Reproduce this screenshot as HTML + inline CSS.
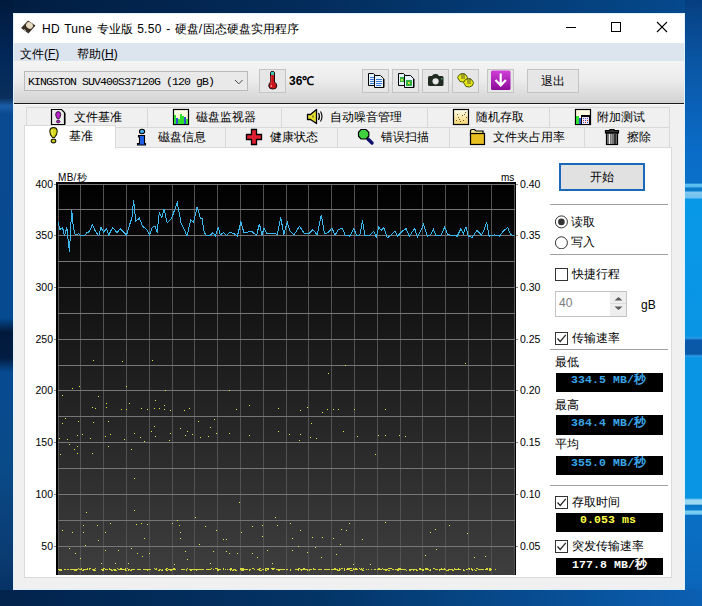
<!DOCTYPE html>
<html><head><meta charset="utf-8">
<style>
*{margin:0;padding:0;box-sizing:border-box}
html,body{width:702px;height:606px;overflow:hidden}
body{position:relative;font-family:"Liberation Sans",sans-serif;font-size:12px;color:#000;
background:linear-gradient(90deg,#011d40 0%,#032a58 40%,#054a8e 100%)}
.a{position:absolute}
.t{position:absolute;white-space:nowrap;line-height:12px;font-size:12px}
#rstrip{left:685px;top:0;width:17px;height:606px;background:linear-gradient(180deg,#063f80 0px,#0a55a3 60px,#0a6cc8 150px,#0a70c8 183px,#60c0f0 184.5px,#50b8ee 187px,#0a78c8 188px,#0a80d0 191px,#80c8f0 192px,#70c0f0 198px,#0898e8 199px,#0a94e4 336px,#2a9ae8 338px,#0a58a8 340.5px,#0a58a8 354px,#2a9ae8 356px,#0a94e4 358px,#0a94e4 498px,#9ad8f4 500px,#9ad8f4 504px,#0a78c8 505.5px,#0a80d0 510px,#80d0f0 511px,#70c8f0 514px,#0a70c4 515.5px,#0a68bc 580px,#0a5aac 606px)}
#lstrip{left:0;top:0;width:13px;height:606px;background:linear-gradient(180deg,#011a3c 0px,#02285a 60px,#0a2f5c 98px,#1a5ea8 106px,#0a4a90 114px,#064a8f 318px,#021a3c 332px,#021d42 358px,#074a90 372px,#0a4a88 470px,#0a3a70 560px,#042d60 606px)}
#bstrip{left:0;top:590px;width:702px;height:16px;background:linear-gradient(90deg,#02234c 0%,#033466 45%,#0b5fb2 100%)}
#win{left:13px;top:13px;width:672px;height:577px;background:#f0f0f0;border:1px solid #dff1fb}
#title{left:14px;top:14px;width:670px;height:29px;background:#fff}
#menu{left:14px;top:43px;width:670px;height:18px;background:#dce4ee}
#tool{left:14px;top:61px;width:670px;height:42px;background:linear-gradient(180deg,#f4f4f4 0%,#ececec 45%,#d2d2d2 100%)}
#tline{left:14px;top:103px;width:670px;height:1px;background:#1a1a1a;box-shadow:0 1px 0 #fafafa}
.btn{position:absolute;background:#e6e6e6;border:1px solid #c4c4c4}
.tab{position:absolute;background:#f0f0f0;border:1px solid #d9d9d9;border-bottom:none}
.sep{position:absolute;height:1px;background:#a0a0a0}
.cb{position:absolute;width:13px;height:13px;border:1px solid #333;background:#fff}
.box{position:absolute;background:#000}
.mono{position:absolute;white-space:nowrap;font-family:"Liberation Mono",monospace;font-weight:bold;font-size:11.5px;line-height:12px;letter-spacing:0.1px}
</style></head><body>
<div class="a" id="lstrip"></div><div class="a" id="rstrip"></div>
<div class="a" id="bstrip"></div>
<div class="a" id="win"></div>
<div class="a" id="title"></div>
<!-- app icon -->
<svg class="a" style="left:20px;top:19px" width="17" height="16" viewBox="0 0 17 16">
<path d="M1 9 L8 1.5 L15.5 6.5 L8.5 14.5 Z" fill="#3a3026"/>
<ellipse cx="9.5" cy="6.5" rx="3.6" ry="3" fill="#e8dcc0" transform="rotate(35 9.5 6.5)"/>
<path d="M4 10 L6 12" stroke="#aaa" stroke-width="1"/>
</svg>
<div class="t" style="left:42px;top:23px"><span style="letter-spacing:0.3px;word-spacing:0.8px">HD Tune </span>专业版<span style="letter-spacing:0.3px;word-spacing:0.8px"> 5.50 - </span>硬盘<span style="letter-spacing:1px">/</span>固态硬盘实用程序</div>
<!-- caption buttons -->
<div class="a" style="left:566px;top:27px;width:10px;height:1px;background:#000"></div>
<div class="a" style="left:611px;top:22px;width:10px;height:10px;border:1px solid #000"></div>
<svg class="a" style="left:656px;top:21px" width="12" height="12" viewBox="0 0 12 12"><path d="M1 1 L11 11 M11 1 L1 11" stroke="#000" stroke-width="1.1"/></svg>

<div class="a" id="menu"></div>
<div class="t" style="left:20px;top:48px">文件(<u>F</u>)</div>
<div class="t" style="left:77px;top:48px">帮助(<u>H</u>)</div>

<div class="a" id="tool"></div>
<!-- combo -->
<div class="a" style="left:24px;top:71px;width:224px;height:20px;background:#e9e9e9;border:1px solid #b9b9b9"></div>
<div class="a" style="left:28px;top:76px;white-space:nowrap;font-family:'Liberation Mono',monospace;font-size:11.5px;line-height:11px;letter-spacing:-0.9px">KINGSTON SUV400S37120G (120 gB)</div>
<svg class="a" style="left:234px;top:79px" width="10" height="6" viewBox="0 0 10 6"><path d="M1 1 L4.8 4.8 L8.6 1" fill="none" stroke="#444" stroke-width="1"/></svg>
<!-- temp button -->
<div class="btn" style="left:259px;top:69px;width:27px;height:24px"></div>
<svg class="a" style="left:266px;top:70px" width="13" height="21" viewBox="266 70 13 21" >
<path d="M270.5 72.5 Q270.5 71.5 272.5 71.5 Q274.5 71.5 274.5 72.5 V82 Q276.8 83.5 276.8 86 Q276.8 89 272.8 89 Q268.8 89 268.8 86 Q268.8 83.5 270.5 82 Z" fill="#c8141c" stroke="#1a0a0a" stroke-width="1"/>
<rect x="271" y="72" width="3" height="3" fill="#38c8b0"/>
<path d="M271 76 V84" stroke="#e85058" stroke-width="0.8"/>
<circle cx="271.3" cy="86" r="0.8" fill="#f8d0d0"/>
</svg>
<div class="t" style="left:289px;top:75px;font-weight:bold">36℃</div>
<!-- tool buttons -->
<div class="btn" style="left:362px;top:69px;width:27px;height:24px"></div>
<div class="btn" style="left:392px;top:69px;width:27px;height:24px"></div>
<div class="btn" style="left:422px;top:69px;width:27px;height:24px"></div>
<div class="btn" style="left:452px;top:69px;width:27px;height:24px"></div>
<div class="btn" style="left:487px;top:69px;width:27px;height:24px"></div>
<div class="btn" style="left:527px;top:69px;width:52px;height:24px"></div>
<!-- icons -->
<svg class="a" style="left:366px;top:72px" width="20" height="17" viewBox="366 72 20 17" >
<path d="M368.5 73.5 H373.5 L375.5 75.5 V85.5 H368.5 Z" fill="#e4f2ff" stroke="#000" stroke-width="1"/>
<rect x="370" y="77" width="4" height="1" fill="#3a78d8"/><rect x="370" y="79" width="4" height="1" fill="#3a78d8"/><rect x="370" y="81" width="4" height="1" fill="#3a78d8"/><rect x="370" y="83" width="4" height="1" fill="#3a78d8"/>
<path d="M374.5 75.5 H380.5 L383.5 78.5 V87.5 H374.5 Z" fill="#e4f2ff" stroke="#000" stroke-width="1"/>
<path d="M375 87.5 H384 V79" fill="none" stroke="#000" stroke-width="1"/>
<rect x="376" y="79" width="6" height="1" fill="#3a78d8"/><rect x="376" y="81" width="6" height="1" fill="#3a78d8"/><rect x="376" y="83" width="6" height="1" fill="#3a78d8"/><rect x="376" y="85" width="5" height="1" fill="#3a78d8"/>
</svg>
<svg class="a" style="left:396px;top:72px" width="20" height="17" viewBox="396 72 20 17" >
<path d="M398.5 73.5 H403.5 L405.5 75.5 V85.5 H398.5 Z" fill="#e4f2ff" stroke="#000" stroke-width="1"/>
<rect x="400" y="77" width="4" height="5" fill="#30b040"/><rect x="401" y="79" width="2" height="2" fill="#c8e040"/>
<path d="M404.5 75.5 H410.5 L413.5 78.5 V87.5 H404.5 Z" fill="#e4f2ff" stroke="#000" stroke-width="1"/>
<path d="M405 87.5 H414 V79" fill="none" stroke="#000" stroke-width="1"/>
<rect x="406" y="80" width="6" height="6" fill="#30b040"/><rect x="408" y="82" width="2" height="2" fill="#c8e040"/>
</svg>
<svg class="a" style="left:426px;top:72px" width="20" height="16" viewBox="426 72 20 16" >
<rect x="428" y="76" width="15.5" height="10" rx="1.5" fill="#1f2a20"/>
<path d="M432 77 Q432 74 435.5 74 Q439 74 439 77 Z" fill="#1f2a20"/>
<circle cx="435.6" cy="81.3" r="3.1" fill="#e8e8e8"/>
<rect x="441" y="78" width="1.5" height="1.5" fill="#50a060"/>
</svg>
<svg class="a" style="left:455px;top:71px" width="21" height="18" viewBox="455 71 21 18" >
<g stroke="#4a5a00" stroke-width="1" fill="#e8e818">
<path d="M457.5 77.5 L459.5 74.5 L462.5 73.5 L465.5 74.5 L467.5 77.5 L466.5 80.5 L463.5 82 L460 81.5 Z"/>
<path d="M463.5 82.5 L465.5 79.5 L468.5 78.5 L471.5 79.5 L473.5 82.5 L472.5 85.5 L469.5 87 L466 86.5 Z"/>
</g>
<path d="M462 73 V79 M464 73 V79 M468 78 V84 M470 78 V84" stroke="#5a5a30" stroke-width="1"/>
</svg>
<svg class="a" style="left:490px;top:70px" width="22" height="21" viewBox="490 70 22 21" >
<defs><linearGradient id="pg" x1="0" y1="0" x2="0" y2="1"><stop offset="0" stop-color="#d040d8"/><stop offset="1" stop-color="#8c0a98"/></linearGradient></defs>
<rect x="491" y="70.5" width="19.5" height="19.5" rx="1.5" fill="url(#pg)"/>
<path d="M500.7 73.5 V85 M495.5 80 L500.7 85.5 L505.9 80" fill="none" stroke="#fff" stroke-width="2.2"/>
</svg>
<div class="t" style="left:541px;top:75px">退出</div>
<div class="a" id="tline"></div>

<!-- tabs row 1 -->
<div class="tab" style="left:26px;top:107px;width:122px;height:20px"></div>
<div class="tab" style="left:147px;top:107px;width:135px;height:20px"></div>
<div class="tab" style="left:281px;top:107px;width:147px;height:20px"></div>
<div class="tab" style="left:427px;top:107px;width:123px;height:20px"></div>
<div class="tab" style="left:549px;top:107px;width:121px;height:20px"></div>
<!-- tabs row 2 -->
<div class="tab" style="left:115px;top:127px;width:111px;height:20px"></div>
<div class="tab" style="left:225px;top:127px;width:113px;height:20px"></div>
<div class="tab" style="left:337px;top:127px;width:113px;height:20px"></div>
<div class="tab" style="left:449px;top:127px;width:136px;height:20px"></div>
<div class="tab" style="left:584px;top:127px;width:86px;height:20px"></div>
<!-- panel -->
<div class="a" style="left:24px;top:147px;width:648px;height:431px;background:#fff;border:1px solid #d9d9d9"></div>
<div class="tab" style="left:24px;top:125px;width:92px;height:24px;background:#fff;border-color:#d9d9d9"></div>
<div class="a" style="left:25px;top:147px;width:90px;height:2px;background:#fff"></div>

<!-- tab labels row1 -->
<div class="t" style="left:74px;top:111px">文件基准</div>
<div class="t" style="left:196px;top:111px">磁盘监视器</div>
<div class="t" style="left:330px;top:111px">自动噪音管理</div>
<div class="t" style="left:476px;top:111px">随机存取</div>
<div class="t" style="left:597px;top:111px">附加测试</div>
<!-- tab labels row2 -->
<div class="t" style="left:69px;top:130px">基准</div>
<div class="t" style="left:158px;top:131px">磁盘信息</div>
<div class="t" style="left:270px;top:131px">健康状态</div>
<div class="t" style="left:381px;top:131px">错误扫描</div>
<div class="t" style="left:493px;top:131px">文件夹占用率</div>
<div class="t" style="left:627px;top:131px">擦除</div>

<!-- tab icons row1 -->
<svg class="a" style="left:50px;top:108px" width="17" height="18" viewBox="50 108 17 18" >
<path d="M51.5 109.5 H61.5 L64.5 112.5 V124.5 H51.5 Z" fill="#ececec" stroke="#000" stroke-width="1.2"/>
<path d="M52 124.5 H65 V113" fill="none" stroke="#000" stroke-width="1"/>
<path d="M58.2 111.6 Q60.7 111.6 60.7 114.4 Q60.7 116.8 58.9 119 H57.5 Q55.7 116.8 55.7 114.4 Q55.7 111.6 58.2 111.6 Z" fill="#b820c8" stroke="#301030" stroke-width="0.9"/>
<ellipse cx="58.2" cy="121.6" rx="1.8" ry="1.3" fill="#b820c8" stroke="#301030" stroke-width="0.8"/>
</svg>
<svg class="a" style="left:172px;top:108px" width="18" height="18" viewBox="172 108 18 18" >
<defs><linearGradient id="ly" x1="0" y1="0" x2="0" y2="1"><stop offset="0" stop-color="#fffff0"/><stop offset="1" stop-color="#f8f0b0"/></linearGradient></defs>
<rect x="173.5" y="109.5" width="15" height="15" fill="url(#ly)" stroke="#000" stroke-width="1.2"/>
<g shape-rendering="crispEdges">
<rect x="174" y="115" width="2" height="9" fill="#30e030"/><rect x="176" y="118" width="2" height="6" fill="#3050d0"/>
<rect x="178" y="119" width="2" height="5" fill="#30e030"/><rect x="180" y="114" width="2" height="10" fill="#30e030"/>
<rect x="182" y="116" width="2" height="8" fill="#30e030"/><rect x="184" y="117" width="2" height="7" fill="#3050d0"/>
<rect x="186" y="119" width="2" height="5" fill="#30e030"/>
</g>
</svg>
<svg class="a" style="left:305px;top:108px" width="19" height="17" viewBox="305 108 19 17" >
<path d="M307.5 114.5 H310.5 L316.5 109.5 V123.5 L310.5 119.5 H307.5 Z" fill="#e8e030" stroke="#000" stroke-width="1.3" stroke-linejoin="round"/>
<path d="M318.5 113 Q320.5 116.5 318.5 120" fill="none" stroke="#000" stroke-width="1.2"/>
<path d="M320.5 111.5 Q323.5 116.5 320.5 121.5" fill="none" stroke="#000" stroke-width="1.1"/>
<path d="M313 115.5 V117.5" stroke="#333" stroke-width="1"/>
</svg>
<svg class="a" style="left:452px;top:108px" width="18" height="18" viewBox="452 108 18 18" >
<defs><linearGradient id="yg" x1="0" y1="0" x2="0" y2="1"><stop offset="0" stop-color="#fffff0"/><stop offset="1" stop-color="#f4d470"/></linearGradient></defs>
<rect x="453.5" y="109.5" width="15" height="15" fill="url(#yg)" stroke="#000" stroke-width="1.2"/>
<g fill="#7a5a20" shape-rendering="crispEdges"><rect x="456" y="120" width="1" height="1"/><rect x="458" y="117" width="1" height="1"/><rect x="460" y="121" width="1" height="1"/><rect x="462" y="115" width="1" height="1"/><rect x="465" y="112" width="1" height="1"/><rect x="466" y="117" width="1" height="1"/><rect x="457" y="114" width="1" height="1"/><rect x="463" y="120" width="1" height="1"/><rect x="464" y="114" width="1" height="1"/><rect x="459" y="119" width="1" height="1"/></g>
</svg>
<svg class="a" style="left:574px;top:108px" width="18" height="18" viewBox="574 108 18 18" >
<rect x="575.5" y="109.5" width="15" height="15" fill="#fffbe0" stroke="#000" stroke-width="1.2"/>
<g shape-rendering="crispEdges">
<rect x="576" y="116" width="3" height="8" fill="#30e030"/><rect x="579" y="118" width="2" height="6" fill="#3050d0"/>
<rect x="581" y="115" width="9" height="9" fill="#000"/><rect x="582" y="117" width="7" height="7" fill="#f4e8f4"/>
<rect x="583" y="118" width="1" height="1" fill="#3050d0"/><rect x="585" y="118" width="1" height="1" fill="#3050d0"/><rect x="587" y="118" width="1" height="1" fill="#3050d0"/>
<rect x="583" y="120" width="1" height="1" fill="#c03030"/><rect x="585" y="120" width="1" height="1" fill="#3050d0"/><rect x="587" y="120" width="1" height="1" fill="#c03030"/>
<rect x="583" y="122" width="1" height="1" fill="#3050d0"/><rect x="585" y="122" width="1" height="1" fill="#c03030"/><rect x="587" y="122" width="1" height="1" fill="#3050d0"/>
</g>
</svg>
<!-- tab icons row2 -->
<svg class="a" style="left:48px;top:126px" width="11" height="19" viewBox="48 126 11 19" >
<path d="M53.5 127.6 Q57.2 127.6 57.2 131.5 Q57.2 134.5 54.5 137.5 H52.5 Q49.8 134.5 49.8 131.5 Q49.8 127.6 53.5 127.6 Z" fill="#d8d818" stroke="#202000" stroke-width="1.1"/>
<ellipse cx="53.5" cy="141" rx="2.3" ry="1.9" fill="#c8c818" stroke="#202000" stroke-width="1.1"/>
<path d="M52 130 Q52 133 53 135" stroke="#f0f070" stroke-width="1" fill="none"/>
</svg>
<svg class="a" style="left:136px;top:128px" width="11" height="18" viewBox="136 128 11 18" >
<ellipse cx="142" cy="131.5" rx="2.6" ry="2.2" fill="#48b0f0" stroke="#000" stroke-width="1.1"/>
<path d="M138.5 135.5 H144.5 V143.5 H145.5 V145 H137.5 V143.5 H139.5 V137 H138.5 Z" fill="#2060e8" stroke="#000" stroke-width="1.1"/>
</svg>
<svg class="a" style="left:245px;top:128px" width="18" height="18" viewBox="245 128 18 18" >
<path d="M251.5 129.5 H256.5 V134.5 H261.5 V139.5 H256.5 V144.5 H251.5 V139.5 H246.5 V134.5 H251.5 Z" fill="#e02030" stroke="#000" stroke-width="1.3"/>
</svg>
<svg class="a" style="left:356px;top:128px" width="20" height="18" viewBox="356 128 20 18" >
<path d="M372 143 L368 139" stroke="#10106a" stroke-width="3.4" stroke-linecap="round"/>
<path d="M361 129.5 H366 L368.8 132.3 V136.2 L366 139 H361 L358.5 136.2 V132.3 Z" fill="#40d040" stroke="#000" stroke-width="1.2"/>
</svg>
<svg class="a" style="left:469px;top:128px" width="17" height="18" viewBox="469 128 17 18" >
<path d="M470.5 130.5 Q470.5 129.5 472 129.5 H474.5 L476 131 H483 V135 H470.5 Z" fill="#f0e890" stroke="#000" stroke-width="1.2"/>
<rect x="470.5" y="133.5" width="14" height="11" fill="#e0b820" stroke="#000" stroke-width="1.2"/>
<rect x="472" y="135" width="11" height="8" fill="#e8c020"/>
</svg>
<svg class="a" style="left:604px;top:128px" width="17" height="18" viewBox="604 128 17 18" >
<path d="M605.5 130.5 H610 V129.5 H614 V130.5 H618.5 V133 H605.5 Z" fill="#333" stroke="#000" stroke-width="1.2"/>
<rect x="606.5" y="133" width="11" height="11.5" fill="#777" stroke="#000" stroke-width="1.2"/>
<rect x="609" y="134" width="1" height="10" fill="#eee"/><rect x="611" y="134" width="1" height="10" fill="#999"/><rect x="614" y="134" width="2" height="10" fill="#333"/>
</svg>

<!-- chart labels -->
<div class="a" style="left:0;top:0;font-size:10px;line-height:10px;color:#000">
<div class="t" style="left:58px;top:173px;font-size:10px;line-height:10px;letter-spacing:0.3px">MB/秒</div>
<div class="t" style="left:501px;top:173px;font-size:10px;line-height:10px">ms</div>
</div>
<div class="t" style="right:649px;top:179px;font-size:10.5px;line-height:10px;text-align:right">400</div><div class="a" style="left:54px;top:184px;width:2px;height:1px;background:#888"></div><div class="t" style="right:649px;top:230px;font-size:10.5px;line-height:10px;text-align:right">350</div><div class="a" style="left:54px;top:235px;width:2px;height:1px;background:#888"></div><div class="t" style="right:649px;top:282px;font-size:10.5px;line-height:10px;text-align:right">300</div><div class="a" style="left:54px;top:287px;width:2px;height:1px;background:#888"></div><div class="t" style="right:649px;top:334px;font-size:10.5px;line-height:10px;text-align:right">250</div><div class="a" style="left:54px;top:339px;width:2px;height:1px;background:#888"></div><div class="t" style="right:649px;top:385px;font-size:10.5px;line-height:10px;text-align:right">200</div><div class="a" style="left:54px;top:390px;width:2px;height:1px;background:#888"></div><div class="t" style="right:649px;top:437px;font-size:10.5px;line-height:10px;text-align:right">150</div><div class="a" style="left:54px;top:442px;width:2px;height:1px;background:#888"></div><div class="t" style="right:649px;top:489px;font-size:10.5px;line-height:10px;text-align:right">100</div><div class="a" style="left:54px;top:494px;width:2px;height:1px;background:#888"></div><div class="t" style="right:649px;top:541px;font-size:10.5px;line-height:10px;text-align:right">50</div><div class="a" style="left:54px;top:546px;width:2px;height:1px;background:#888"></div><div class="t" style="left:520px;top:179px;font-size:10.5px;line-height:10px">0.40</div><div class="a" style="left:516px;top:184px;width:2px;height:1px;background:#888"></div><div class="t" style="left:520px;top:230px;font-size:10.5px;line-height:10px">0.35</div><div class="a" style="left:516px;top:235px;width:2px;height:1px;background:#888"></div><div class="t" style="left:520px;top:282px;font-size:10.5px;line-height:10px">0.30</div><div class="a" style="left:516px;top:287px;width:2px;height:1px;background:#888"></div><div class="t" style="left:520px;top:334px;font-size:10.5px;line-height:10px">0.25</div><div class="a" style="left:516px;top:339px;width:2px;height:1px;background:#888"></div><div class="t" style="left:520px;top:385px;font-size:10.5px;line-height:10px">0.20</div><div class="a" style="left:516px;top:390px;width:2px;height:1px;background:#888"></div><div class="t" style="left:520px;top:437px;font-size:10.5px;line-height:10px">0.15</div><div class="a" style="left:516px;top:442px;width:2px;height:1px;background:#888"></div><div class="t" style="left:520px;top:489px;font-size:10.5px;line-height:10px">0.10</div><div class="a" style="left:516px;top:494px;width:2px;height:1px;background:#888"></div><div class="t" style="left:520px;top:541px;font-size:10.5px;line-height:10px">0.05</div><div class="a" style="left:516px;top:546px;width:2px;height:1px;background:#888"></div>
<svg class="a" style="left:56px;top:182px" width="460" height="393" viewBox="56 182 460 393" shape-rendering="crispEdges"><defs><linearGradient id="cg" x1="0" y1="0" x2="0" y2="1"><stop offset="0" stop-color="#000"/><stop offset="1" stop-color="#3e3e3e"/></linearGradient></defs><rect x="56" y="182" width="460" height="393" fill="url(#cg)"/><rect x="56" y="182" width="460" height="2" fill="#000"/><rect x="515" y="182" width="1" height="393" fill="#000"/><rect x="56" y="182" width="2" height="393" fill="#000"/><rect x="58" y="184" width="1" height="391" fill="#525252"/><rect x="80" y="184" width="1" height="391" fill="#525252"/><rect x="103" y="184" width="1" height="391" fill="#525252"/><rect x="126" y="184" width="1" height="391" fill="#525252"/><rect x="149" y="184" width="1" height="391" fill="#525252"/><rect x="172" y="184" width="1" height="391" fill="#525252"/><rect x="194" y="184" width="1" height="391" fill="#525252"/><rect x="217" y="184" width="1" height="391" fill="#525252"/><rect x="240" y="184" width="1" height="391" fill="#525252"/><rect x="263" y="184" width="1" height="391" fill="#525252"/><rect x="286" y="184" width="1" height="391" fill="#525252"/><rect x="308" y="184" width="1" height="391" fill="#525252"/><rect x="331" y="184" width="1" height="391" fill="#525252"/><rect x="354" y="184" width="1" height="391" fill="#525252"/><rect x="377" y="184" width="1" height="391" fill="#525252"/><rect x="400" y="184" width="1" height="391" fill="#525252"/><rect x="422" y="184" width="1" height="391" fill="#525252"/><rect x="445" y="184" width="1" height="391" fill="#525252"/><rect x="468" y="184" width="1" height="391" fill="#525252"/><rect x="491" y="184" width="1" height="391" fill="#525252"/><rect x="514" y="184" width="1" height="391" fill="#525252"/><rect x="58" y="184" width="457" height="1" fill="#767676"/><rect x="58" y="209" width="457" height="1" fill="#767676"/><rect x="58" y="235" width="457" height="1" fill="#767676"/><rect x="58" y="261" width="457" height="1" fill="#767676"/><rect x="58" y="287" width="457" height="1" fill="#767676"/><rect x="58" y="313" width="457" height="1" fill="#767676"/><rect x="58" y="339" width="457" height="1" fill="#767676"/><rect x="58" y="365" width="457" height="1" fill="#767676"/><rect x="58" y="390" width="457" height="1" fill="#767676"/><rect x="58" y="416" width="457" height="1" fill="#767676"/><rect x="58" y="442" width="457" height="1" fill="#767676"/><rect x="58" y="468" width="457" height="1" fill="#767676"/><rect x="58" y="494" width="457" height="1" fill="#767676"/><rect x="58" y="520" width="457" height="1" fill="#767676"/><rect x="58" y="546" width="457" height="1" fill="#767676"/><rect x="93" y="360" width="1" height="1" fill="#e6e640"/><rect x="122" y="361" width="1" height="1" fill="#e6e640"/><rect x="152" y="360" width="1" height="1" fill="#e6e640"/><rect x="72" y="388" width="1" height="1" fill="#e6e640"/><rect x="79" y="386" width="1" height="1" fill="#e6e640"/><rect x="126" y="386" width="1" height="1" fill="#e6e640"/><rect x="165" y="390" width="1" height="1" fill="#e6e640"/><rect x="229" y="390" width="1" height="1" fill="#e6e640"/><rect x="62" y="395" width="1" height="1" fill="#e6e640"/><rect x="98" y="396" width="1" height="1" fill="#e6e640"/><rect x="106" y="403" width="1" height="1" fill="#e6e640"/><rect x="92" y="407" width="1" height="1" fill="#e6e640"/><rect x="95" y="408" width="1" height="1" fill="#e6e640"/><rect x="106" y="407" width="1" height="1" fill="#e6e640"/><rect x="121" y="409" width="1" height="1" fill="#e6e640"/><rect x="126" y="409" width="1" height="1" fill="#e6e640"/><rect x="129" y="403" width="1" height="1" fill="#e6e640"/><rect x="141" y="408" width="1" height="1" fill="#e6e640"/><rect x="147" y="409" width="1" height="1" fill="#e6e640"/><rect x="155" y="400" width="1" height="1" fill="#e6e640"/><rect x="154" y="408" width="1" height="1" fill="#e6e640"/><rect x="159" y="408" width="1" height="1" fill="#e6e640"/><rect x="164" y="405" width="1" height="1" fill="#e6e640"/><rect x="164" y="409" width="1" height="1" fill="#e6e640"/><rect x="170" y="410" width="1" height="1" fill="#e6e640"/><rect x="184" y="410" width="1" height="1" fill="#e6e640"/><rect x="189" y="408" width="1" height="1" fill="#e6e640"/><rect x="236" y="409" width="1" height="1" fill="#e6e640"/><rect x="249" y="405" width="1" height="1" fill="#e6e640"/><rect x="278" y="408" width="1" height="1" fill="#e6e640"/><rect x="65" y="418" width="1" height="1" fill="#e6e640"/><rect x="62" y="423" width="1" height="1" fill="#e6e640"/><rect x="78" y="421" width="1" height="1" fill="#e6e640"/><rect x="93" y="422" width="1" height="1" fill="#e6e640"/><rect x="108" y="421" width="1" height="1" fill="#e6e640"/><rect x="198" y="421" width="1" height="1" fill="#e6e640"/><rect x="214" y="419" width="1" height="1" fill="#e6e640"/><rect x="210" y="427" width="1" height="1" fill="#e6e640"/><rect x="154" y="426" width="1" height="1" fill="#e6e640"/><rect x="151" y="431" width="1" height="1" fill="#e6e640"/><rect x="134" y="433" width="1" height="1" fill="#e6e640"/><rect x="170" y="433" width="1" height="1" fill="#e6e640"/><rect x="180" y="428" width="1" height="1" fill="#e6e640"/><rect x="187" y="431" width="1" height="1" fill="#e6e640"/><rect x="185" y="435" width="1" height="1" fill="#e6e640"/><rect x="192" y="434" width="1" height="1" fill="#e6e640"/><rect x="200" y="437" width="1" height="1" fill="#e6e640"/><rect x="208" y="436" width="1" height="1" fill="#e6e640"/><rect x="216" y="433" width="1" height="1" fill="#e6e640"/><rect x="229" y="433" width="1" height="1" fill="#e6e640"/><rect x="249" y="435" width="1" height="1" fill="#e6e640"/><rect x="278" y="431" width="1" height="1" fill="#e6e640"/><rect x="59" y="438" width="1" height="1" fill="#e6e640"/><rect x="67" y="439" width="1" height="1" fill="#e6e640"/><rect x="77" y="435" width="1" height="1" fill="#e6e640"/><rect x="82" y="434" width="1" height="1" fill="#e6e640"/><rect x="90" y="438" width="1" height="1" fill="#e6e640"/><rect x="105" y="436" width="1" height="1" fill="#e6e640"/><rect x="110" y="434" width="1" height="1" fill="#e6e640"/><rect x="124" y="439" width="1" height="1" fill="#e6e640"/><rect x="140" y="437" width="1" height="1" fill="#e6e640"/><rect x="144" y="441" width="1" height="1" fill="#e6e640"/><rect x="169" y="440" width="1" height="1" fill="#e6e640"/><rect x="155" y="436" width="1" height="1" fill="#e6e640"/><rect x="69" y="444" width="1" height="1" fill="#e6e640"/><rect x="74" y="449" width="1" height="1" fill="#e6e640"/><rect x="77" y="446" width="1" height="1" fill="#e6e640"/><rect x="108" y="446" width="1" height="1" fill="#e6e640"/><rect x="131" y="449" width="1" height="1" fill="#e6e640"/><rect x="92" y="453" width="1" height="1" fill="#e6e640"/><rect x="60" y="454" width="1" height="1" fill="#e6e640"/><rect x="77" y="453" width="1" height="1" fill="#e6e640"/><rect x="345" y="365" width="1" height="1" fill="#e6e640"/><rect x="328" y="373" width="1" height="1" fill="#e6e640"/><rect x="465" y="363" width="1" height="1" fill="#e6e640"/><rect x="300" y="410" width="1" height="1" fill="#e6e640"/><rect x="307" y="407" width="1" height="1" fill="#e6e640"/><rect x="322" y="412" width="1" height="1" fill="#e6e640"/><rect x="327" y="409" width="1" height="1" fill="#e6e640"/><rect x="333" y="409" width="1" height="1" fill="#e6e640"/><rect x="338" y="409" width="1" height="1" fill="#e6e640"/><rect x="354" y="409" width="1" height="1" fill="#e6e640"/><rect x="385" y="409" width="1" height="1" fill="#e6e640"/><rect x="311" y="423" width="1" height="1" fill="#e6e640"/><rect x="343" y="431" width="1" height="1" fill="#e6e640"/><rect x="289" y="434" width="1" height="1" fill="#e6e640"/><rect x="300" y="434" width="1" height="1" fill="#e6e640"/><rect x="310" y="437" width="1" height="1" fill="#e6e640"/><rect x="316" y="438" width="1" height="1" fill="#e6e640"/><rect x="299" y="440" width="1" height="1" fill="#e6e640"/><rect x="357" y="436" width="1" height="1" fill="#e6e640"/><rect x="378" y="435" width="1" height="1" fill="#e6e640"/><rect x="385" y="435" width="1" height="1" fill="#e6e640"/><rect x="399" y="435" width="1" height="1" fill="#e6e640"/><rect x="405" y="436" width="1" height="1" fill="#e6e640"/><rect x="375" y="454" width="1" height="1" fill="#e6e640"/><rect x="134" y="478" width="1" height="1" fill="#e6e640"/><rect x="134" y="510" width="1" height="1" fill="#e6e640"/><rect x="86" y="512" width="1" height="1" fill="#e6e640"/><rect x="195" y="517" width="1" height="1" fill="#e6e640"/><rect x="275" y="517" width="1" height="1" fill="#e6e640"/><rect x="239" y="502" width="1" height="1" fill="#e6e640"/><rect x="62" y="530" width="1" height="1" fill="#e6e640"/><rect x="72" y="532" width="1" height="1" fill="#e6e640"/><rect x="83" y="525" width="1" height="1" fill="#e6e640"/><rect x="83" y="532" width="1" height="1" fill="#e6e640"/><rect x="97" y="525" width="1" height="1" fill="#e6e640"/><rect x="110" y="523" width="1" height="1" fill="#e6e640"/><rect x="105" y="532" width="1" height="1" fill="#e6e640"/><rect x="136" y="524" width="1" height="1" fill="#e6e640"/><rect x="141" y="523" width="1" height="1" fill="#e6e640"/><rect x="147" y="524" width="1" height="1" fill="#e6e640"/><rect x="172" y="523" width="1" height="1" fill="#e6e640"/><rect x="177" y="520" width="1" height="1" fill="#e6e640"/><rect x="179" y="525" width="1" height="1" fill="#e6e640"/><rect x="180" y="532" width="1" height="1" fill="#e6e640"/><rect x="205" y="526" width="1" height="1" fill="#e6e640"/><rect x="216" y="530" width="1" height="1" fill="#e6e640"/><rect x="241" y="532" width="1" height="1" fill="#e6e640"/><rect x="252" y="526" width="1" height="1" fill="#e6e640"/><rect x="262" y="525" width="1" height="1" fill="#e6e640"/><rect x="277" y="525" width="1" height="1" fill="#e6e640"/><rect x="98" y="540" width="1" height="1" fill="#e6e640"/><rect x="144" y="538" width="1" height="1" fill="#e6e640"/><rect x="180" y="538" width="1" height="1" fill="#e6e640"/><rect x="223" y="539" width="1" height="1" fill="#e6e640"/><rect x="226" y="539" width="1" height="1" fill="#e6e640"/><rect x="262" y="536" width="1" height="1" fill="#e6e640"/><rect x="199" y="544" width="1" height="1" fill="#e6e640"/><rect x="85" y="545" width="1" height="1" fill="#e6e640"/><rect x="69" y="548" width="1" height="1" fill="#e6e640"/><rect x="75" y="553" width="1" height="1" fill="#e6e640"/><rect x="80" y="558" width="1" height="1" fill="#e6e640"/><rect x="105" y="550" width="1" height="1" fill="#e6e640"/><rect x="118" y="550" width="1" height="1" fill="#e6e640"/><rect x="131" y="548" width="1" height="1" fill="#e6e640"/><rect x="137" y="553" width="1" height="1" fill="#e6e640"/><rect x="142" y="556" width="1" height="1" fill="#e6e640"/><rect x="149" y="553" width="1" height="1" fill="#e6e640"/><rect x="185" y="551" width="1" height="1" fill="#e6e640"/><rect x="187" y="559" width="1" height="1" fill="#e6e640"/><rect x="213" y="551" width="1" height="1" fill="#e6e640"/><rect x="226" y="551" width="1" height="1" fill="#e6e640"/><rect x="229" y="553" width="1" height="1" fill="#e6e640"/><rect x="237" y="553" width="1" height="1" fill="#e6e640"/><rect x="252" y="553" width="1" height="1" fill="#e6e640"/><rect x="267" y="550" width="1" height="1" fill="#e6e640"/><rect x="257" y="557" width="1" height="1" fill="#e6e640"/><rect x="272" y="563" width="1" height="1" fill="#e6e640"/><rect x="210" y="563" width="1" height="1" fill="#e6e640"/><rect x="101" y="563" width="1" height="1" fill="#e6e640"/><rect x="115" y="563" width="1" height="1" fill="#e6e640"/><rect x="128" y="563" width="1" height="1" fill="#e6e640"/><rect x="174" y="564" width="1" height="1" fill="#e6e640"/><rect x="290" y="523" width="1" height="1" fill="#e6e640"/><rect x="300" y="530" width="1" height="1" fill="#e6e640"/><rect x="349" y="523" width="1" height="1" fill="#e6e640"/><rect x="346" y="530" width="1" height="1" fill="#e6e640"/><rect x="341" y="529" width="1" height="1" fill="#e6e640"/><rect x="385" y="522" width="1" height="1" fill="#e6e640"/><rect x="449" y="525" width="1" height="1" fill="#e6e640"/><rect x="430" y="532" width="1" height="1" fill="#e6e640"/><rect x="435" y="529" width="1" height="1" fill="#e6e640"/><rect x="467" y="533" width="1" height="1" fill="#e6e640"/><rect x="292" y="538" width="1" height="1" fill="#e6e640"/><rect x="312" y="537" width="1" height="1" fill="#e6e640"/><rect x="322" y="537" width="1" height="1" fill="#e6e640"/><rect x="333" y="538" width="1" height="1" fill="#e6e640"/><rect x="340" y="544" width="1" height="1" fill="#e6e640"/><rect x="362" y="539" width="1" height="1" fill="#e6e640"/><rect x="298" y="546" width="1" height="1" fill="#e6e640"/><rect x="315" y="547" width="1" height="1" fill="#e6e640"/><rect x="292" y="550" width="1" height="1" fill="#e6e640"/><rect x="307" y="552" width="1" height="1" fill="#e6e640"/><rect x="336" y="554" width="1" height="1" fill="#e6e640"/><rect x="321" y="557" width="1" height="1" fill="#e6e640"/><rect x="436" y="549" width="1" height="1" fill="#e6e640"/><rect x="425" y="555" width="1" height="1" fill="#e6e640"/><rect x="474" y="557" width="1" height="1" fill="#e6e640"/><rect x="485" y="556" width="1" height="1" fill="#e6e640"/><rect x="353" y="564" width="1" height="1" fill="#e6e640"/><rect x="370" y="564" width="1" height="1" fill="#e6e640"/><rect x="199" y="569" width="2" height="1" fill="#d8d838"/><rect x="89" y="569" width="1" height="1" fill="#d8d838"/><rect x="83" y="569" width="1" height="1" fill="#d8d838"/><rect x="247" y="569" width="1" height="1" fill="#d8d838"/><rect x="243" y="570" width="1" height="1" fill="#d8d838"/><rect x="155" y="569" width="2" height="1" fill="#d8d838"/><rect x="310" y="569" width="2" height="1" fill="#d8d838"/><rect x="78" y="568" width="1" height="1" fill="#d8d838"/><rect x="121" y="569" width="1" height="1" fill="#d8d838"/><rect x="415" y="569" width="1" height="1" fill="#d8d838"/><rect x="337" y="569" width="1" height="1" fill="#d8d838"/><rect x="85" y="569" width="1" height="1" fill="#d8d838"/><rect x="356" y="569" width="1" height="1" fill="#d8d838"/><rect x="314" y="569" width="1" height="1" fill="#d8d838"/><rect x="405" y="569" width="1" height="1" fill="#d8d838"/><rect x="309" y="569" width="2" height="1" fill="#d8d838"/><rect x="377" y="569" width="2" height="1" fill="#d8d838"/><rect x="109" y="569" width="2" height="1" fill="#d8d838"/><rect x="124" y="569" width="1" height="1" fill="#d8d838"/><rect x="350" y="570" width="1" height="1" fill="#d8d838"/><rect x="441" y="569" width="2" height="1" fill="#d8d838"/><rect x="318" y="569" width="1" height="1" fill="#d8d838"/><rect x="425" y="568" width="1" height="1" fill="#d8d838"/><rect x="348" y="569" width="2" height="1" fill="#d8d838"/><rect x="341" y="568" width="2" height="1" fill="#d8d838"/><rect x="182" y="569" width="2" height="1" fill="#d8d838"/><rect x="67" y="569" width="1" height="1" fill="#d8d838"/><rect x="109" y="569" width="2" height="1" fill="#d8d838"/><rect x="114" y="569" width="1" height="1" fill="#d8d838"/><rect x="439" y="569" width="1" height="1" fill="#d8d838"/><rect x="298" y="568" width="2" height="1" fill="#d8d838"/><rect x="436" y="569" width="1" height="1" fill="#d8d838"/><rect x="215" y="568" width="2" height="1" fill="#d8d838"/><rect x="124" y="569" width="1" height="1" fill="#d8d838"/><rect x="160" y="569" width="1" height="1" fill="#d8d838"/><rect x="173" y="569" width="1" height="1" fill="#d8d838"/><rect x="219" y="569" width="2" height="1" fill="#d8d838"/><rect x="360" y="569" width="2" height="1" fill="#d8d838"/><rect x="354" y="569" width="2" height="1" fill="#d8d838"/><rect x="399" y="568" width="2" height="1" fill="#d8d838"/><rect x="229" y="569" width="1" height="1" fill="#d8d838"/><rect x="335" y="569" width="1" height="1" fill="#d8d838"/><rect x="149" y="569" width="1" height="1" fill="#d8d838"/><rect x="81" y="569" width="1" height="1" fill="#d8d838"/><rect x="102" y="569" width="1" height="1" fill="#d8d838"/><rect x="440" y="569" width="1" height="1" fill="#d8d838"/><rect x="168" y="569" width="1" height="1" fill="#d8d838"/><rect x="111" y="570" width="2" height="1" fill="#d8d838"/><rect x="262" y="569" width="1" height="1" fill="#d8d838"/><rect x="102" y="569" width="1" height="1" fill="#d8d838"/><rect x="421" y="569" width="1" height="1" fill="#d8d838"/><rect x="474" y="569" width="1" height="1" fill="#d8d838"/><rect x="295" y="569" width="1" height="1" fill="#d8d838"/><rect x="486" y="568" width="2" height="1" fill="#d8d838"/><rect x="172" y="569" width="1" height="1" fill="#d8d838"/><rect x="396" y="569" width="2" height="1" fill="#d8d838"/><rect x="202" y="569" width="2" height="1" fill="#d8d838"/><rect x="489" y="568" width="2" height="1" fill="#d8d838"/><rect x="416" y="570" width="1" height="1" fill="#d8d838"/><rect x="284" y="569" width="1" height="1" fill="#d8d838"/><rect x="70" y="569" width="1" height="1" fill="#d8d838"/><rect x="361" y="568" width="1" height="1" fill="#d8d838"/><rect x="468" y="568" width="2" height="1" fill="#d8d838"/><rect x="217" y="569" width="1" height="1" fill="#d8d838"/><rect x="144" y="569" width="2" height="1" fill="#d8d838"/><rect x="452" y="570" width="1" height="1" fill="#d8d838"/><rect x="344" y="570" width="1" height="1" fill="#d8d838"/><rect x="347" y="568" width="2" height="1" fill="#d8d838"/><rect x="386" y="569" width="1" height="1" fill="#d8d838"/><rect x="403" y="569" width="2" height="1" fill="#d8d838"/><rect x="483" y="569" width="1" height="1" fill="#d8d838"/><rect x="472" y="570" width="1" height="1" fill="#d8d838"/><rect x="113" y="569" width="2" height="1" fill="#d8d838"/><rect x="411" y="569" width="2" height="1" fill="#d8d838"/><rect x="487" y="569" width="1" height="1" fill="#d8d838"/><rect x="298" y="569" width="1" height="1" fill="#d8d838"/><rect x="483" y="569" width="1" height="1" fill="#d8d838"/><rect x="466" y="569" width="2" height="1" fill="#d8d838"/><rect x="419" y="569" width="1" height="1" fill="#d8d838"/><rect x="186" y="569" width="1" height="1" fill="#d8d838"/><rect x="171" y="569" width="1" height="1" fill="#d8d838"/><rect x="456" y="569" width="1" height="1" fill="#d8d838"/><rect x="313" y="568" width="1" height="1" fill="#d8d838"/><rect x="459" y="569" width="1" height="1" fill="#d8d838"/><rect x="287" y="569" width="1" height="1" fill="#d8d838"/><rect x="138" y="569" width="2" height="1" fill="#d8d838"/><rect x="133" y="569" width="2" height="1" fill="#d8d838"/><rect x="301" y="569" width="1" height="1" fill="#d8d838"/><rect x="301" y="570" width="1" height="1" fill="#d8d838"/><rect x="303" y="569" width="1" height="1" fill="#d8d838"/><rect x="396" y="569" width="1" height="1" fill="#d8d838"/><rect x="390" y="568" width="1" height="1" fill="#d8d838"/><rect x="326" y="569" width="1" height="1" fill="#d8d838"/><rect x="361" y="569" width="1" height="1" fill="#d8d838"/><rect x="267" y="568" width="2" height="1" fill="#d8d838"/><rect x="441" y="568" width="1" height="1" fill="#d8d838"/><rect x="303" y="568" width="2" height="1" fill="#d8d838"/><rect x="118" y="569" width="1" height="1" fill="#d8d838"/><rect x="89" y="569" width="1" height="1" fill="#d8d838"/><rect x="351" y="570" width="2" height="1" fill="#d8d838"/><rect x="125" y="570" width="2" height="1" fill="#d8d838"/><rect x="120" y="568" width="2" height="1" fill="#d8d838"/><rect x="154" y="568" width="1" height="1" fill="#d8d838"/><rect x="271" y="568" width="2" height="1" fill="#d8d838"/><rect x="128" y="569" width="1" height="1" fill="#d8d838"/><rect x="206" y="569" width="1" height="1" fill="#d8d838"/><rect x="374" y="569" width="1" height="1" fill="#d8d838"/><rect x="250" y="569" width="1" height="1" fill="#d8d838"/><rect x="331" y="569" width="1" height="1" fill="#d8d838"/><rect x="489" y="570" width="2" height="1" fill="#d8d838"/><rect x="103" y="569" width="1" height="1" fill="#d8d838"/><rect x="399" y="569" width="1" height="1" fill="#d8d838"/><rect x="242" y="568" width="2" height="1" fill="#d8d838"/><rect x="171" y="569" width="2" height="1" fill="#d8d838"/><rect x="307" y="570" width="1" height="1" fill="#d8d838"/><rect x="83" y="569" width="1" height="1" fill="#d8d838"/><rect x="89" y="568" width="2" height="1" fill="#d8d838"/><rect x="409" y="569" width="2" height="1" fill="#d8d838"/><rect x="87" y="568" width="1" height="1" fill="#d8d838"/><rect x="206" y="569" width="2" height="1" fill="#d8d838"/><rect x="175" y="569" width="1" height="1" fill="#d8d838"/><rect x="162" y="569" width="1" height="1" fill="#d8d838"/><rect x="80" y="569" width="1" height="1" fill="#d8d838"/><rect x="191" y="570" width="1" height="1" fill="#d8d838"/><rect x="277" y="569" width="1" height="1" fill="#d8d838"/><rect x="65" y="569" width="1" height="1" fill="#d8d838"/><rect x="379" y="569" width="1" height="1" fill="#d8d838"/><rect x="265" y="568" width="1" height="1" fill="#d8d838"/><rect x="416" y="569" width="1" height="1" fill="#d8d838"/><rect x="423" y="569" width="1" height="1" fill="#d8d838"/><rect x="359" y="568" width="1" height="1" fill="#d8d838"/><rect x="422" y="570" width="2" height="1" fill="#d8d838"/><rect x="235" y="569" width="1" height="1" fill="#d8d838"/><rect x="114" y="569" width="2" height="1" fill="#d8d838"/><rect x="169" y="569" width="1" height="1" fill="#d8d838"/><rect x="426" y="568" width="2" height="1" fill="#d8d838"/><rect x="181" y="569" width="1" height="1" fill="#d8d838"/><rect x="259" y="569" width="1" height="1" fill="#d8d838"/><rect x="173" y="568" width="2" height="1" fill="#d8d838"/><rect x="297" y="569" width="2" height="1" fill="#d8d838"/><rect x="193" y="569" width="1" height="1" fill="#d8d838"/><rect x="225" y="569" width="1" height="1" fill="#d8d838"/><rect x="146" y="569" width="1" height="1" fill="#d8d838"/><rect x="173" y="569" width="1" height="1" fill="#d8d838"/><rect x="76" y="569" width="1" height="1" fill="#d8d838"/><rect x="159" y="569" width="1" height="1" fill="#d8d838"/><rect x="386" y="569" width="2" height="1" fill="#d8d838"/><rect x="443" y="569" width="1" height="1" fill="#d8d838"/><rect x="489" y="569" width="2" height="1" fill="#d8d838"/><rect x="339" y="569" width="2" height="1" fill="#d8d838"/><rect x="448" y="569" width="2" height="1" fill="#d8d838"/><rect x="413" y="569" width="1" height="1" fill="#d8d838"/><rect x="278" y="570" width="2" height="1" fill="#d8d838"/><rect x="419" y="569" width="2" height="1" fill="#d8d838"/><rect x="357" y="569" width="1" height="1" fill="#d8d838"/><rect x="71" y="569" width="1" height="1" fill="#d8d838"/><rect x="103" y="570" width="1" height="1" fill="#d8d838"/><rect x="332" y="569" width="2" height="1" fill="#d8d838"/><rect x="272" y="569" width="2" height="1" fill="#d8d838"/><rect x="385" y="569" width="1" height="1" fill="#d8d838"/><rect x="346" y="569" width="2" height="1" fill="#d8d838"/><rect x="168" y="569" width="1" height="1" fill="#d8d838"/><rect x="377" y="569" width="2" height="1" fill="#d8d838"/><rect x="485" y="569" width="1" height="1" fill="#d8d838"/><rect x="267" y="569" width="2" height="1" fill="#d8d838"/><rect x="328" y="569" width="1" height="1" fill="#d8d838"/><rect x="122" y="569" width="2" height="1" fill="#d8d838"/><rect x="191" y="569" width="1" height="1" fill="#d8d838"/><rect x="84" y="569" width="2" height="1" fill="#d8d838"/><rect x="361" y="569" width="1" height="1" fill="#d8d838"/><rect x="284" y="569" width="1" height="1" fill="#d8d838"/><rect x="109" y="568" width="1" height="1" fill="#d8d838"/><rect x="486" y="568" width="1" height="1" fill="#d8d838"/><rect x="259" y="570" width="2" height="1" fill="#d8d838"/><rect x="254" y="569" width="1" height="1" fill="#d8d838"/><rect x="472" y="569" width="1" height="1" fill="#d8d838"/><rect x="120" y="569" width="2" height="1" fill="#d8d838"/><rect x="116" y="570" width="1" height="1" fill="#d8d838"/><rect x="446" y="570" width="1" height="1" fill="#d8d838"/><rect x="451" y="569" width="1" height="1" fill="#d8d838"/><rect x="59" y="569" width="1" height="1" fill="#d8d838"/><rect x="190" y="569" width="1" height="1" fill="#d8d838"/><rect x="196" y="570" width="1" height="1" fill="#d8d838"/><rect x="386" y="570" width="1" height="1" fill="#d8d838"/><rect x="463" y="570" width="2" height="1" fill="#d8d838"/><rect x="184" y="569" width="1" height="1" fill="#d8d838"/><rect x="495" y="569" width="1" height="1" fill="#d8d838"/><rect x="245" y="569" width="1" height="1" fill="#d8d838"/><rect x="102" y="570" width="1" height="1" fill="#d8d838"/><rect x="467" y="569" width="1" height="1" fill="#d8d838"/><rect x="281" y="569" width="1" height="1" fill="#d8d838"/><rect x="476" y="568" width="2" height="1" fill="#d8d838"/><rect x="334" y="568" width="2" height="1" fill="#d8d838"/><rect x="298" y="570" width="1" height="1" fill="#d8d838"/><rect x="378" y="569" width="2" height="1" fill="#d8d838"/><rect x="340" y="569" width="1" height="1" fill="#d8d838"/><rect x="463" y="569" width="1" height="1" fill="#d8d838"/><rect x="208" y="569" width="2" height="1" fill="#d8d838"/><rect x="485" y="569" width="2" height="1" fill="#d8d838"/><rect x="189" y="569" width="1" height="1" fill="#d8d838"/><rect x="131" y="569" width="1" height="1" fill="#d8d838"/><rect x="454" y="569" width="1" height="1" fill="#d8d838"/><rect x="454" y="568" width="1" height="1" fill="#d8d838"/><rect x="119" y="569" width="1" height="1" fill="#d8d838"/><rect x="207" y="569" width="1" height="1" fill="#d8d838"/><rect x="171" y="569" width="2" height="1" fill="#d8d838"/><rect x="386" y="569" width="1" height="1" fill="#d8d838"/><rect x="287" y="569" width="1" height="1" fill="#d8d838"/><rect x="85" y="569" width="2" height="1" fill="#d8d838"/><rect x="113" y="569" width="2" height="1" fill="#d8d838"/><rect x="435" y="569" width="1" height="1" fill="#d8d838"/><rect x="166" y="569" width="1" height="1" fill="#d8d838"/><rect x="475" y="570" width="2" height="1" fill="#d8d838"/><rect x="67" y="569" width="2" height="1" fill="#d8d838"/><rect x="450" y="569" width="1" height="1" fill="#d8d838"/><rect x="58" y="569" width="2" height="1" fill="#d8d838"/><rect x="419" y="568" width="2" height="1" fill="#d8d838"/><rect x="166" y="569" width="1" height="1" fill="#d8d838"/><rect x="286" y="569" width="2" height="1" fill="#d8d838"/><rect x="374" y="569" width="2" height="1" fill="#d8d838"/><rect x="258" y="569" width="1" height="1" fill="#d8d838"/><rect x="400" y="569" width="2" height="1" fill="#d8d838"/><rect x="340" y="569" width="1" height="1" fill="#d8d838"/><rect x="168" y="569" width="2" height="1" fill="#d8d838"/><rect x="107" y="569" width="1" height="1" fill="#d8d838"/><rect x="313" y="569" width="1" height="1" fill="#d8d838"/><rect x="321" y="569" width="1" height="1" fill="#d8d838"/><rect x="259" y="568" width="2" height="1" fill="#d8d838"/><rect x="445" y="569" width="1" height="1" fill="#d8d838"/><rect x="166" y="568" width="2" height="1" fill="#d8d838"/><rect x="192" y="569" width="1" height="1" fill="#d8d838"/><rect x="353" y="569" width="1" height="1" fill="#d8d838"/><rect x="350" y="568" width="1" height="1" fill="#d8d838"/><rect x="72" y="569" width="1" height="1" fill="#d8d838"/><rect x="356" y="569" width="2" height="1" fill="#d8d838"/><rect x="381" y="569" width="1" height="1" fill="#d8d838"/><rect x="482" y="569" width="2" height="1" fill="#d8d838"/><rect x="159" y="569" width="2" height="1" fill="#d8d838"/><rect x="187" y="568" width="1" height="1" fill="#d8d838"/><rect x="140" y="569" width="1" height="1" fill="#d8d838"/><rect x="349" y="568" width="1" height="1" fill="#d8d838"/><rect x="230" y="569" width="2" height="1" fill="#d8d838"/><rect x="120" y="569" width="1" height="1" fill="#d8d838"/><rect x="230" y="568" width="2" height="1" fill="#d8d838"/><rect x="378" y="568" width="2" height="1" fill="#d8d838"/><rect x="202" y="569" width="2" height="1" fill="#d8d838"/><rect x="384" y="569" width="2" height="1" fill="#d8d838"/><rect x="223" y="569" width="1" height="1" fill="#d8d838"/><rect x="132" y="569" width="1" height="1" fill="#d8d838"/><rect x="211" y="568" width="1" height="1" fill="#d8d838"/><rect x="480" y="569" width="1" height="1" fill="#d8d838"/><rect x="417" y="570" width="1" height="1" fill="#d8d838"/><rect x="79" y="569" width="1" height="1" fill="#d8d838"/><rect x="460" y="569" width="1" height="1" fill="#d8d838"/><rect x="450" y="569" width="1" height="1" fill="#d8d838"/><rect x="413" y="570" width="1" height="1" fill="#d8d838"/><rect x="73" y="569" width="2" height="1" fill="#d8d838"/><rect x="170" y="570" width="2" height="1" fill="#d8d838"/><rect x="206" y="569" width="2" height="1" fill="#d8d838"/><rect x="328" y="569" width="2" height="1" fill="#d8d838"/><rect x="196" y="569" width="1" height="1" fill="#d8d838"/><rect x="388" y="568" width="2" height="1" fill="#d8d838"/><rect x="471" y="569" width="1" height="1" fill="#d8d838"/><rect x="266" y="568" width="2" height="1" fill="#d8d838"/><rect x="227" y="569" width="1" height="1" fill="#d8d838"/><rect x="274" y="568" width="1" height="1" fill="#d8d838"/><rect x="409" y="570" width="2" height="1" fill="#d8d838"/><rect x="396" y="569" width="1" height="1" fill="#d8d838"/><rect x="197" y="569" width="2" height="1" fill="#d8d838"/><rect x="92" y="569" width="2" height="1" fill="#d8d838"/><rect x="166" y="569" width="1" height="1" fill="#d8d838"/><rect x="300" y="569" width="2" height="1" fill="#d8d838"/><rect x="444" y="568" width="1" height="1" fill="#d8d838"/><rect x="94" y="569" width="1" height="1" fill="#d8d838"/><rect x="368" y="569" width="1" height="1" fill="#d8d838"/><rect x="240" y="569" width="2" height="1" fill="#d8d838"/><rect x="385" y="570" width="2" height="1" fill="#d8d838"/><rect x="111" y="570" width="1" height="1" fill="#d8d838"/><rect x="306" y="569" width="2" height="1" fill="#d8d838"/><rect x="145" y="569" width="1" height="1" fill="#d8d838"/><rect x="125" y="568" width="1" height="1" fill="#d8d838"/><rect x="200" y="569" width="2" height="1" fill="#d8d838"/><rect x="280" y="569" width="2" height="1" fill="#d8d838"/><rect x="344" y="568" width="1" height="1" fill="#d8d838"/><rect x="265" y="570" width="2" height="1" fill="#d8d838"/><rect x="458" y="569" width="1" height="1" fill="#d8d838"/><rect x="110" y="569" width="2" height="1" fill="#d8d838"/><rect x="313" y="568" width="1" height="1" fill="#d8d838"/><rect x="437" y="569" width="1" height="1" fill="#d8d838"/><rect x="398" y="568" width="1" height="1" fill="#d8d838"/><rect x="319" y="569" width="1" height="1" fill="#d8d838"/><rect x="219" y="569" width="1" height="1" fill="#d8d838"/><rect x="169" y="569" width="2" height="1" fill="#d8d838"/><rect x="147" y="569" width="1" height="1" fill="#d8d838"/><rect x="355" y="569" width="1" height="1" fill="#d8d838"/><rect x="147" y="570" width="1" height="1" fill="#d8d838"/><rect x="85" y="569" width="1" height="1" fill="#d8d838"/><rect x="298" y="569" width="1" height="1" fill="#d8d838"/><rect x="129" y="569" width="1" height="1" fill="#d8d838"/><rect x="182" y="569" width="2" height="1" fill="#d8d838"/><rect x="194" y="569" width="1" height="1" fill="#d8d838"/><rect x="240" y="568" width="2" height="1" fill="#d8d838"/><rect x="217" y="569" width="2" height="1" fill="#d8d838"/><rect x="147" y="569" width="2" height="1" fill="#d8d838"/><rect x="243" y="570" width="1" height="1" fill="#d8d838"/><rect x="444" y="569" width="1" height="1" fill="#d8d838"/><rect x="64" y="569" width="2" height="1" fill="#d8d838"/><rect x="456" y="569" width="2" height="1" fill="#d8d838"/><rect x="220" y="569" width="1" height="1" fill="#d8d838"/><rect x="182" y="569" width="2" height="1" fill="#d8d838"/><rect x="105" y="569" width="2" height="1" fill="#d8d838"/><rect x="481" y="569" width="1" height="1" fill="#d8d838"/><rect x="471" y="568" width="1" height="1" fill="#d8d838"/><rect x="81" y="568" width="1" height="1" fill="#d8d838"/><rect x="454" y="569" width="2" height="1" fill="#d8d838"/><rect x="128" y="570" width="1" height="1" fill="#d8d838"/><rect x="235" y="570" width="2" height="1" fill="#d8d838"/><rect x="138" y="569" width="1" height="1" fill="#d8d838"/><rect x="284" y="569" width="1" height="1" fill="#d8d838"/><rect x="166" y="570" width="2" height="1" fill="#d8d838"/><rect x="76" y="569" width="2" height="1" fill="#d8d838"/><rect x="74" y="570" width="1" height="1" fill="#d8d838"/><rect x="320" y="569" width="2" height="1" fill="#d8d838"/><rect x="192" y="569" width="1" height="1" fill="#d8d838"/><rect x="244" y="569" width="1" height="1" fill="#d8d838"/><rect x="249" y="569" width="2" height="1" fill="#d8d838"/><rect x="272" y="569" width="2" height="1" fill="#d8d838"/><rect x="399" y="569" width="1" height="1" fill="#d8d838"/><rect x="265" y="569" width="1" height="1" fill="#d8d838"/><rect x="246" y="569" width="1" height="1" fill="#d8d838"/><rect x="281" y="569" width="2" height="1" fill="#d8d838"/><rect x="94" y="570" width="2" height="1" fill="#d8d838"/><rect x="282" y="569" width="1" height="1" fill="#d8d838"/><rect x="223" y="568" width="1" height="1" fill="#d8d838"/><rect x="433" y="568" width="2" height="1" fill="#d8d838"/><rect x="414" y="569" width="2" height="1" fill="#d8d838"/><rect x="273" y="568" width="2" height="1" fill="#d8d838"/><rect x="130" y="570" width="2" height="1" fill="#d8d838"/><rect x="86" y="569" width="2" height="1" fill="#d8d838"/><rect x="127" y="568" width="1" height="1" fill="#d8d838"/><rect x="415" y="569" width="1" height="1" fill="#d8d838"/><rect x="460" y="569" width="1" height="1" fill="#d8d838"/><rect x="279" y="569" width="1" height="1" fill="#d8d838"/><rect x="137" y="569" width="2" height="1" fill="#d8d838"/><rect x="355" y="568" width="1" height="1" fill="#d8d838"/><rect x="401" y="569" width="1" height="1" fill="#d8d838"/><rect x="336" y="569" width="2" height="1" fill="#d8d838"/><rect x="301" y="569" width="2" height="1" fill="#d8d838"/><rect x="103" y="568" width="2" height="1" fill="#d8d838"/><rect x="230" y="570" width="1" height="1" fill="#d8d838"/><rect x="491" y="569" width="1" height="1" fill="#d8d838"/><rect x="392" y="569" width="1" height="1" fill="#d8d838"/><rect x="383" y="569" width="2" height="1" fill="#d8d838"/><rect x="169" y="569" width="2" height="1" fill="#d8d838"/><rect x="314" y="569" width="1" height="1" fill="#d8d838"/><rect x="58" y="569" width="1" height="1" fill="#d8d838"/><rect x="327" y="569" width="1" height="1" fill="#d8d838"/><rect x="450" y="569" width="1" height="1" fill="#d8d838"/><rect x="344" y="569" width="1" height="1" fill="#d8d838"/><rect x="213" y="569" width="1" height="1" fill="#d8d838"/><rect x="156" y="569" width="1" height="1" fill="#d8d838"/><rect x="147" y="569" width="1" height="1" fill="#d8d838"/><rect x="117" y="568" width="1" height="1" fill="#d8d838"/><rect x="123" y="569" width="2" height="1" fill="#d8d838"/><rect x="439" y="570" width="1" height="1" fill="#d8d838"/><rect x="173" y="569" width="2" height="1" fill="#d8d838"/><rect x="304" y="569" width="2" height="1" fill="#d8d838"/><rect x="252" y="568" width="2" height="1" fill="#d8d838"/><rect x="166" y="568" width="1" height="1" fill="#d8d838"/><rect x="290" y="569" width="1" height="1" fill="#d8d838"/><rect x="83" y="570" width="1" height="1" fill="#d8d838"/><rect x="299" y="568" width="1" height="1" fill="#d8d838"/><rect x="145" y="569" width="1" height="1" fill="#d8d838"/><rect x="339" y="570" width="1" height="1" fill="#d8d838"/><rect x="193" y="569" width="1" height="1" fill="#d8d838"/><rect x="447" y="570" width="2" height="1" fill="#d8d838"/><rect x="60" y="570" width="2" height="1" fill="#d8d838"/><rect x="261" y="570" width="1" height="1" fill="#d8d838"/><rect x="156" y="569" width="1" height="1" fill="#d8d838"/><rect x="75" y="569" width="2" height="1" fill="#d8d838"/><rect x="362" y="570" width="2" height="1" fill="#d8d838"/><rect x="174" y="569" width="1" height="1" fill="#d8d838"/><rect x="403" y="569" width="1" height="1" fill="#d8d838"/><rect x="339" y="568" width="1" height="1" fill="#d8d838"/><rect x="443" y="569" width="1" height="1" fill="#d8d838"/><rect x="161" y="570" width="2" height="1" fill="#d8d838"/><rect x="384" y="569" width="2" height="1" fill="#d8d838"/><rect x="201" y="569" width="2" height="1" fill="#d8d838"/><rect x="334" y="569" width="2" height="1" fill="#d8d838"/><rect x="486" y="569" width="2" height="1" fill="#d8d838"/><rect x="363" y="568" width="1" height="1" fill="#d8d838"/><rect x="375" y="569" width="1" height="1" fill="#d8d838"/><rect x="150" y="569" width="1" height="1" fill="#d8d838"/><rect x="456" y="569" width="1" height="1" fill="#d8d838"/><rect x="104" y="568" width="1" height="1" fill="#d8d838"/><rect x="120" y="569" width="1" height="1" fill="#d8d838"/><rect x="361" y="569" width="2" height="1" fill="#d8d838"/><rect x="380" y="569" width="1" height="1" fill="#d8d838"/><rect x="217" y="570" width="2" height="1" fill="#d8d838"/><rect x="448" y="569" width="2" height="1" fill="#d8d838"/><rect x="458" y="568" width="1" height="1" fill="#d8d838"/><rect x="148" y="569" width="1" height="1" fill="#d8d838"/><rect x="429" y="570" width="2" height="1" fill="#d8d838"/><rect x="419" y="569" width="1" height="1" fill="#d8d838"/><rect x="101" y="569" width="2" height="1" fill="#d8d838"/><rect x="147" y="569" width="1" height="1" fill="#d8d838"/><rect x="67" y="569" width="1" height="1" fill="#d8d838"/><rect x="371" y="569" width="1" height="1" fill="#d8d838"/><rect x="480" y="569" width="2" height="1" fill="#d8d838"/><rect x="328" y="569" width="1" height="1" fill="#d8d838"/><rect x="249" y="570" width="1" height="1" fill="#d8d838"/><rect x="366" y="569" width="1" height="1" fill="#d8d838"/><rect x="435" y="569" width="2" height="1" fill="#d8d838"/><rect x="132" y="569" width="1" height="1" fill="#d8d838"/><rect x="391" y="568" width="1" height="1" fill="#d8d838"/><rect x="272" y="569" width="2" height="1" fill="#d8d838"/><rect x="138" y="569" width="1" height="1" fill="#d8d838"/><rect x="422" y="569" width="2" height="1" fill="#d8d838"/><rect x="182" y="569" width="2" height="1" fill="#d8d838"/><rect x="276" y="569" width="2" height="1" fill="#d8d838"/><rect x="93" y="570" width="2" height="1" fill="#d8d838"/><rect x="402" y="569" width="1" height="1" fill="#d8d838"/><rect x="233" y="569" width="2" height="1" fill="#d8d838"/><rect x="95" y="568" width="1" height="1" fill="#d8d838"/><rect x="148" y="569" width="2" height="1" fill="#d8d838"/><rect x="277" y="569" width="2" height="1" fill="#d8d838"/><rect x="160" y="569" width="1" height="1" fill="#d8d838"/><rect x="388" y="570" width="2" height="1" fill="#d8d838"/><rect x="210" y="569" width="1" height="1" fill="#d8d838"/><rect x="427" y="569" width="2" height="1" fill="#d8d838"/><rect x="132" y="569" width="2" height="1" fill="#d8d838"/><rect x="311" y="569" width="1" height="1" fill="#d8d838"/><rect x="445" y="569" width="1" height="1" fill="#d8d838"/><rect x="190" y="570" width="2" height="1" fill="#d8d838"/><rect x="125" y="569" width="1" height="1" fill="#d8d838"/><rect x="201" y="569" width="1" height="1" fill="#d8d838"/><rect x="201" y="569" width="2" height="1" fill="#d8d838"/><rect x="377" y="569" width="2" height="1" fill="#d8d838"/><rect x="102" y="569" width="2" height="1" fill="#d8d838"/><rect x="406" y="570" width="1" height="1" fill="#d8d838"/><rect x="143" y="569" width="1" height="1" fill="#d8d838"/><rect x="148" y="569" width="1" height="1" fill="#d8d838"/><rect x="232" y="570" width="2" height="1" fill="#d8d838"/><rect x="277" y="569" width="1" height="1" fill="#d8d838"/><rect x="120" y="569" width="1" height="1" fill="#d8d838"/><rect x="382" y="568" width="1" height="1" fill="#d8d838"/><rect x="309" y="570" width="1" height="1" fill="#d8d838"/><rect x="158" y="570" width="2" height="1" fill="#d8d838"/><rect x="397" y="570" width="2" height="1" fill="#d8d838"/><rect x="355" y="569" width="1" height="1" fill="#d8d838"/><rect x="195" y="569" width="1" height="1" fill="#d8d838"/><rect x="241" y="570" width="2" height="1" fill="#d8d838"/><rect x="333" y="569" width="1" height="1" fill="#d8d838"/><rect x="257" y="569" width="1" height="1" fill="#d8d838"/><rect x="353" y="568" width="1" height="1" fill="#d8d838"/><rect x="344" y="570" width="1" height="1" fill="#d8d838"/><rect x="272" y="568" width="1" height="1" fill="#d8d838"/><rect x="295" y="569" width="2" height="1" fill="#d8d838"/><rect x="469" y="569" width="1" height="1" fill="#d8d838"/><rect x="309" y="569" width="2" height="1" fill="#d8d838"/><rect x="282" y="569" width="2" height="1" fill="#d8d838"/><rect x="286" y="569" width="2" height="1" fill="#d8d838"/><rect x="150" y="569" width="1" height="1" fill="#d8d838"/><rect x="392" y="569" width="2" height="1" fill="#d8d838"/><rect x="213" y="569" width="1" height="1" fill="#d8d838"/><rect x="233" y="569" width="1" height="1" fill="#d8d838"/><rect x="242" y="569" width="1" height="1" fill="#d8d838"/><rect x="174" y="569" width="2" height="1" fill="#d8d838"/><rect x="469" y="569" width="1" height="1" fill="#d8d838"/><rect x="409" y="569" width="1" height="1" fill="#d8d838"/><rect x="114" y="570" width="2" height="1" fill="#d8d838"/><rect x="335" y="569" width="1" height="1" fill="#d8d838"/><rect x="156" y="568" width="1" height="1" fill="#d8d838"/><rect x="337" y="570" width="2" height="1" fill="#d8d838"/><rect x="263" y="569" width="1" height="1" fill="#d8d838"/><rect x="112" y="570" width="1" height="1" fill="#d8d838"/><rect x="430" y="569" width="1" height="1" fill="#d8d838"/><rect x="169" y="569" width="1" height="1" fill="#d8d838"/><rect x="59" y="570" width="1" height="1" fill="#d8d838"/><rect x="165" y="569" width="1" height="1" fill="#d8d838"/><rect x="245" y="569" width="2" height="1" fill="#d8d838"/><rect x="216" y="568" width="2" height="1" fill="#d8d838"/><rect x="82" y="570" width="2" height="1" fill="#d8d838"/><rect x="401" y="569" width="2" height="1" fill="#d8d838"/><rect x="335" y="569" width="1" height="1" fill="#d8d838"/><rect x="474" y="569" width="1" height="1" fill="#d8d838"/><rect x="102" y="569" width="1" height="1" fill="#d8d838"/><rect x="398" y="569" width="1" height="1" fill="#d8d838"/><rect x="453" y="570" width="1" height="1" fill="#d8d838"/><rect x="448" y="569" width="2" height="1" fill="#d8d838"/><rect x="350" y="568" width="2" height="1" fill="#d8d838"/><rect x="425" y="569" width="2" height="1" fill="#d8d838"/><rect x="290" y="570" width="1" height="1" fill="#d8d838"/><rect x="444" y="569" width="1" height="1" fill="#d8d838"/><rect x="160" y="569" width="1" height="1" fill="#d8d838"/><rect x="83" y="569" width="1" height="1" fill="#d8d838"/><rect x="273" y="569" width="1" height="1" fill="#d8d838"/><rect x="435" y="569" width="2" height="1" fill="#d8d838"/><rect x="262" y="569" width="2" height="1" fill="#d8d838"/><rect x="426" y="569" width="1" height="1" fill="#d8d838"/><rect x="478" y="569" width="2" height="1" fill="#d8d838"/><rect x="336" y="569" width="2" height="1" fill="#d8d838"/><rect x="356" y="568" width="1" height="1" fill="#d8d838"/><rect x="487" y="569" width="1" height="1" fill="#d8d838"/><rect x="451" y="569" width="2" height="1" fill="#d8d838"/><rect x="331" y="569" width="2" height="1" fill="#d8d838"/><rect x="218" y="569" width="1" height="1" fill="#d8d838"/><rect x="395" y="569" width="1" height="1" fill="#d8d838"/><rect x="243" y="569" width="2" height="1" fill="#d8d838"/><rect x="186" y="570" width="1" height="1" fill="#d8d838"/><rect x="278" y="569" width="1" height="1" fill="#d8d838"/><rect x="485" y="569" width="2" height="1" fill="#d8d838"/><rect x="202" y="569" width="1" height="1" fill="#d8d838"/><rect x="314" y="569" width="2" height="1" fill="#d8d838"/><rect x="75" y="570" width="2" height="1" fill="#d8d838"/><rect x="296" y="569" width="1" height="1" fill="#d8d838"/><rect x="60" y="569" width="2" height="1" fill="#d8d838"/><rect x="324" y="569" width="2" height="1" fill="#d8d838"/><rect x="456" y="569" width="2" height="1" fill="#d8d838"/><rect x="332" y="569" width="1" height="1" fill="#d8d838"/><polyline points="58.2,222.0 59.7,229.5 62.5,227.4 64.6,236.0 66.8,227.4 68.2,241.0 69.5,252.0 70.4,232.7 71.7,209.7 73.2,226.3 75.3,234.9 78.5,233.8 80.6,235.3 83.8,236.0 87.0,232.7 89.2,231.7 92.4,224.6 95.6,231.7 98.8,236.0 101.0,227.4 103.7,232.7 106.3,228.5 108.8,234.9 112.7,227.4 117.0,232.7 120.2,228.5 123.4,231.7 126.6,234.9 129.8,224.2 131.9,217.8 133.6,200.3 135.8,221.0 139.4,218.2 142.6,226.3 146.9,229.5 149.4,235.3 152.2,227.4 155.4,226.3 157.1,232.7 159.3,212.4 161.8,217.8 164.0,208.8 167.2,223.1 171.5,218.8 177.2,202.4 181.1,223.1 184.3,229.5 187.0,236.0 190.7,219.9 193.5,222.0 197.1,207.1 200.7,218.8 202.1,218.8 204.3,232.7 206.4,235.3 209.6,236.0 212.8,232.7 215.4,236.0 218.2,227.4 220.3,234.9 223.5,232.7 226.7,235.3 229.9,232.3 234.2,233.8 237.4,236.0 241.0,221.6 243.8,232.7 247.0,232.3 251.3,231.0 254.5,233.8 256.6,235.3 259.4,223.8 262.0,234.9 264.1,228.0 266.7,233.8 270.5,233.8 274.8,233.8 277.4,234.4 280.8,217.4 283.8,234.9 287.2,222.0 289.7,230.6 294.0,234.9 299.4,226.3 304.7,233.8 309.0,233.8 312.8,229.5 317.1,234.9 321.4,214.6 324.4,233.8 328.2,232.7 332.0,228.0 335.0,235.3 338.5,229.5 342.1,228.0 345.3,235.3 350.0,236.1 353.7,228.6 357.0,236.1 360.0,234.4 362.5,220.4 364.9,235.4 369.9,235.4 373.7,231.1 376.2,237.4 378.7,226.9 381.2,230.4 383.6,227.4 387.4,237.9 391.1,234.9 394.9,231.1 397.4,236.1 402.3,231.1 406.1,228.6 409.3,236.1 412.3,231.9 414.8,228.6 417.3,237.4 421.0,229.9 423.5,224.4 427.3,236.1 431.0,234.4 433.5,229.4 436.0,235.4 441.0,235.4 444.7,226.9 447.7,234.4 452.2,235.4 457.2,236.1 460.9,228.6 463.4,233.6 465.9,226.9 468.4,236.1 472.1,237.4 477.1,230.4 481.6,234.9 484.1,229.9 486.6,221.9 489.1,236.1 494.6,234.9 499.6,236.1 503.3,231.1 507.6,227.4 510.8,234.9 514.5,235.4" fill="none" stroke="#3ab8ee" stroke-width="1" shape-rendering="crispEdges"/></svg>

<!-- right panel -->
<div class="a" style="left:559px;top:163px;width:86px;height:28px;background:#e1e1e1;border:2px solid #1c68b8"></div>
<div class="t" style="left:590px;top:171px">开始</div>
<div class="sep" style="left:550px;top:204px;width:118px"></div>
<svg class="a" style="left:554px;top:215px" width="14" height="34" viewBox="0 0 14 34">
<circle cx="7.4" cy="6.9" r="6" fill="#fff" stroke="#333" stroke-width="1"/>
<circle cx="7.4" cy="6.9" r="3.3" fill="#333"/>
<circle cx="7.4" cy="27.8" r="6" fill="#fff" stroke="#333" stroke-width="1"/>
</svg>
<div class="t" style="left:571px;top:216px">读取</div>
<div class="t" style="left:571px;top:236px">写入</div>
<div class="sep" style="left:550px;top:254px;width:118px"></div>
<div class="cb" style="left:555px;top:268px"></div>
<div class="t" style="left:572px;top:268px">快捷行程</div>
<div class="a" style="left:555px;top:291px;width:72px;height:26px;border:1px solid #c4c4c4;background:#fff"></div>
<div class="a" style="left:610px;top:292px;width:16px;height:24px;background:#eeeeee"></div><div class="a" style="left:610px;top:303px;width:16px;height:1px;background:#dcdcdc"></div>
<svg class="a" style="left:614px;top:297px" width="9" height="14" viewBox="0 0 9 14"><path d="M0.5 3.5 L4.5 0 L8.5 3.5 Z M0.5 9.5 L4.5 13 L8.5 9.5 Z" fill="#5a5a5a"/></svg>
<div class="t" style="left:559px;top:297px;color:#7a7a7a">40</div>
<div class="t" style="left:641px;top:299px">gB</div>
<div class="cb" style="left:555px;top:332px"></div>
<svg class="a" style="left:556px;top:333px" width="11" height="11" viewBox="0 0 11 11"><path d="M1.5 5.5 L4.2 8.5 L9.8 1.8" fill="none" stroke="#222" stroke-width="1.2"/></svg>
<div class="t" style="left:572px;top:332px">传输速率</div>
<div class="sep" style="left:550px;top:349px;width:118px"></div>
<div class="t" style="left:555px;top:356px">最低</div>
<div class="box" style="left:556px;top:373px;width:107px;height:19px"></div>
<div class="mono" style="left:571px;top:374px;color:#3aa6e8">334.5 MB/秒</div>
<div class="t" style="left:555px;top:399px">最高</div>
<div class="box" style="left:556px;top:415px;width:107px;height:20px"></div>
<div class="mono" style="left:571px;top:417px;color:#3aa6e8">384.4 MB/秒</div>
<div class="t" style="left:555px;top:438px">平均</div>
<div class="box" style="left:556px;top:456px;width:107px;height:19px"></div>
<div class="mono" style="left:571px;top:457px;color:#3aa6e8">355.0 MB/秒</div>
<div class="sep" style="left:550px;top:485px;width:118px"></div>
<div class="cb" style="left:555px;top:496px"></div>
<svg class="a" style="left:556px;top:497px" width="11" height="11" viewBox="0 0 11 11"><path d="M1.5 5.5 L4.2 8.5 L9.8 1.8" fill="none" stroke="#222" stroke-width="1.2"/></svg>
<div class="t" style="left:572px;top:496px">存取时间</div>
<div class="box" style="left:556px;top:513px;width:107px;height:19px"></div>
<div class="mono" style="left:580px;top:514px;color:#ffff48">0.053 ms</div>
<div class="cb" style="left:555px;top:540px"></div>
<svg class="a" style="left:556px;top:541px" width="11" height="11" viewBox="0 0 11 11"><path d="M1.5 5.5 L4.2 8.5 L9.8 1.8" fill="none" stroke="#222" stroke-width="1.2"/></svg>
<div class="t" style="left:572px;top:540px">突发传输速率</div>
<div class="box" style="left:556px;top:558px;width:107px;height:17px"></div>
<div class="mono" style="left:572px;top:559px;color:#fff">177.8 MB/秒</div>
</body></html>
